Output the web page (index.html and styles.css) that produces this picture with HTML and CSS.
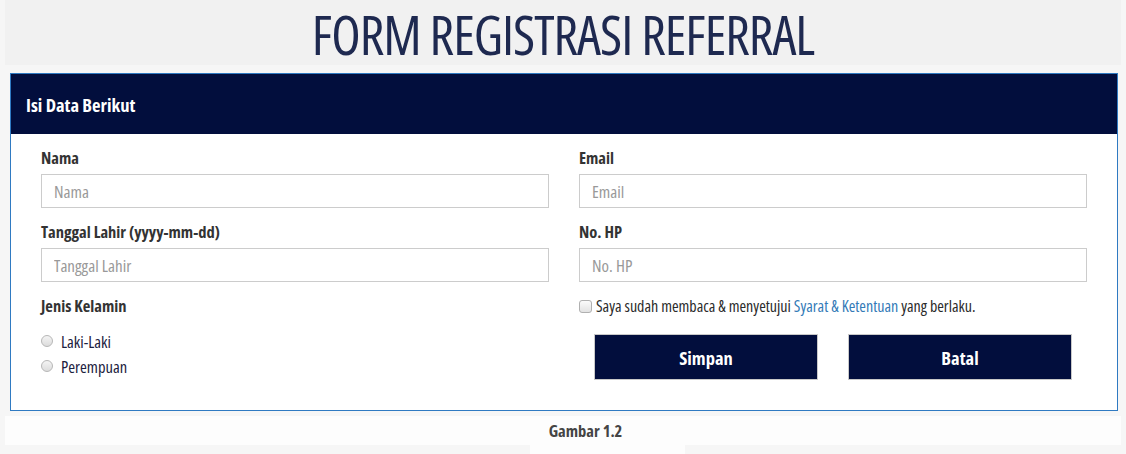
FILE: index.html
```html
<!DOCTYPE html>
<html lang="id">
<head>
<meta charset="utf-8">
<title>Form Registrasi Referral</title>
<link rel="stylesheet" href="styles.css">
</head>
<body>
<header class="title-bar">
  <h1 class="title">FORM REGISTRASI REFERRAL</h1>
</header>
<section class="panel">
  <div class="panel-heading">Isi Data Berikut</div>
  <form class="panel-body">
    <div class="col">
      <div class="group">
        <label class="lbl">Nama</label>
        <input class="field" type="text" placeholder="Nama">
      </div>
      <div class="group">
        <label class="lbl">Tanggal Lahir (yyyy-mm-dd)</label>
        <input class="field" type="text" placeholder="Tanggal Lahir">
      </div>
      <div class="group">
        <label class="lbl">Jenis Kelamin</label>
        <div class="radios">
          <label class="radio"><span class="dot"></span>Laki-Laki</label>
          <label class="radio"><span class="dot"></span>Perempuan</label>
        </div>
      </div>
    </div>
    <div class="col">
      <div class="group">
        <label class="lbl">Email</label>
        <input class="field" type="text" placeholder="Email">
      </div>
      <div class="group">
        <label class="lbl">No. HP</label>
        <input class="field" type="text" placeholder="No. HP">
      </div>
      <div class="agree"><span class="box"></span>Saya sudah membaca &amp; menyetujui <a class="link" href="#">Syarat &amp; Ketentuan</a> yang berlaku.</div>
      <div class="actions">
        <div class="act"><button type="button" class="btn">Simpan</button></div>
        <div class="act"><button type="button" class="btn">Batal</button></div>
      </div>
    </div>
  </form>
</section>
<footer class="caption">Gambar 1.2</footer>
<div class="bottom"><div class="bottom-white"></div></div>
</body>
</html>
```
FILE: styles.css
```css
* { box-sizing: border-box; }
html, body { margin: 0; padding: 0; }
body {
  background: #f6f6f6;
  font-family: "Open Sans", "Liberation Sans", sans-serif;
  font-stretch: 75%;
  width: 1126px;
  height: 454px;
  overflow: hidden;
}
.title-bar {
  margin: 0 5px;
  height: 65px;
  background: #f1f1f1;
  display: flex;
  justify-content: center;
  align-items: center;
}
.title {
  margin: 0;
  font-size: 54px;
  font-weight: normal;
  color: #1e2950;
  line-height: 1.15;
  letter-spacing: -1px;
  padding-top: 3px;
}
.panel {
  margin: 8px 8px 0 10px;
  border: 1px solid #2f7ac2;
  background: #fff;
  height: 338px;
}
.panel-heading {
  height: 60px;
  background: #020e3d;
  color: #fff;
  font-size: 18.5px;
  font-weight: bold;
  padding-left: 15px;
  display: flex;
  align-items: center;
}
.panel-body {
  display: grid;
  grid-template-columns: 508px 508px;
  column-gap: 30px;
  padding: 14px 30px 0;
  margin: 0;
}
.group { margin-bottom: 14px; }
.lbl {
  display: block;
  height: 20px;
  line-height: 20px;
  font-size: 16.5px;
  font-weight: bold;
  color: #333;
  margin-bottom: 6px;
}
.field {
  display: block;
  width: 100%;
  height: 34px;
  border: 1px solid #cccccc;
  padding: 0 12px;
  font: inherit;
  font-size: 17px;
  color: #555;
  background: #fff;
  outline: none;
}
.field::placeholder { color: #999; }
.radios { display: flex; flex-direction: column; gap: 5px; padding-top: 9px; }
.radio {
  display: flex;
  align-items: center;
  height: 20px;
  font-size: 16.5px;
  color: #1c2140;
}
.dot {
  width: 12px;
  height: 12px;
  border-radius: 50%;
  border: 1px solid #b7b7b7;
  background: linear-gradient(#f4f4f4, #dcdcdc);
  margin-right: 8px;
}
.agree {
  display: flex;
  align-items: center;
  height: 20px;
  font-size: 16px;
  color: #2b2b2b;
  white-space: pre;
  margin-top: 0;
}
.box {
  width: 13px;
  height: 13px;
  border: 1px solid #b0b0b0;
  border-radius: 3px;
  background: linear-gradient(#fbfbfb, #e2e2e2);
  margin-right: 4px;
}
.link { color: #337ab7; text-decoration: none; }
.actions {
  display: grid;
  grid-template-columns: 1fr 1fr;
  margin-top: 18px;
}
.act { padding: 0 15px; }
.btn {
  display: block;
  width: 100%;
  height: 46px;
  background: #020e3d;
  border: 1px solid #c9c9c9;
  color: #fff;
  font: inherit;
  font-size: 18.5px;
  font-weight: bold;
}
.caption {
  margin: 5px 5px 0;
  height: 29px;
  background: #fdfdfd;
  text-align: center;
  font-size: 16.5px;
  font-weight: bold;
  color: #444;
  line-height: 29px;
  padding-left: 45px;
}
.bottom { height: 10px; display: flex; justify-content: flex-start; }
.bottom-white { margin-left: 530px; width: 155px; background: #fdfdfd; }
```
